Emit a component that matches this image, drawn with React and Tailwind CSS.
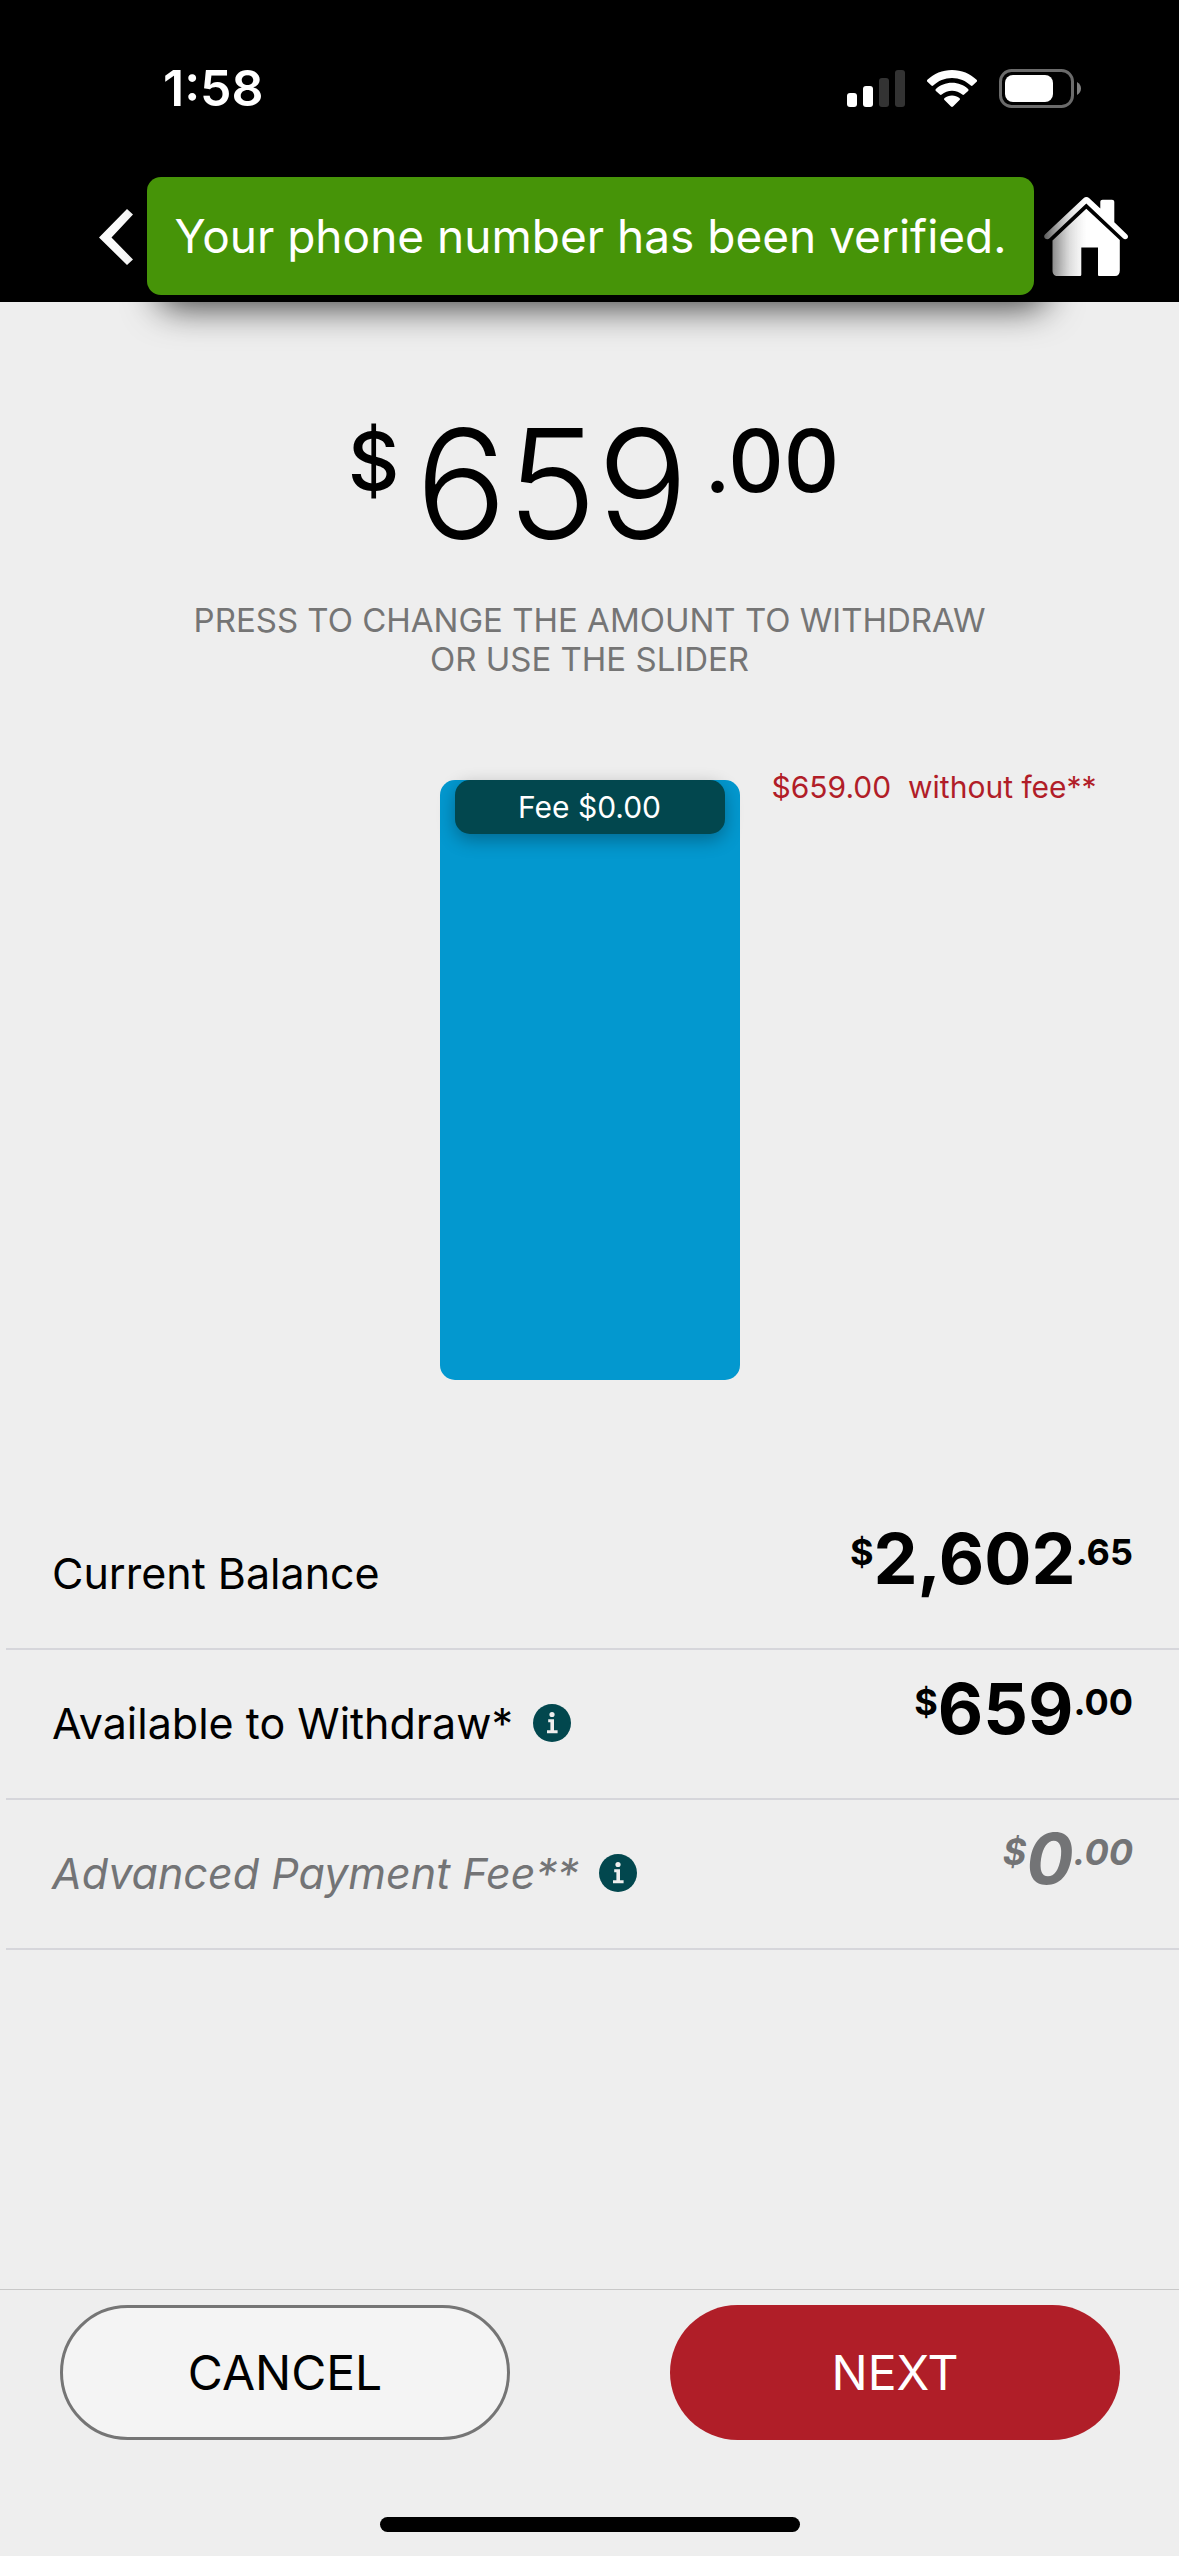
import { useState } from 'react';

const AVAILABLE = 659;

const rows = [
    { label: 'Current Balance', whole: '2,602', cents: '.65' },
    { label: 'Available to Withdraw*', whole: '659', cents: '.00', info: true },
    { label: 'Advanced Payment Fee**', whole: '0', cents: '.00', info: true, muted: true },
];

function SignalIcon() {
    return (
        <svg className="h-[37px] w-[58px]" viewBox="0 0 58 37" aria-hidden="true">
            <rect x="0" y="23" width="10" height="14" rx="3" fill="#fff" />
            <rect x="16" y="16" width="10" height="21" rx="3" fill="#fff" />
            <rect x="32" y="8" width="10" height="29" rx="3" fill="#333" />
            <rect x="48" y="0" width="10" height="37" rx="3" fill="#333" />
        </svg>
    );
}

function WifiIcon() {
    return (
        <svg className="h-[37px] w-[50px]" viewBox="0 0 50 37" fill="#fff" aria-hidden="true">
            <path d="M25 0C34.500 0 43.300 3.700 49.600 9.800C50.200 10.400 50.200 11.200 49.600 11.800L45.600 15.500C45.100 16 44.300 16 43.800 15.500C38.900 10.700 32.200 7.900 25 7.900S11.100 10.700 6.200 15.500C5.700 16 4.900 16 4.400 15.500L.4 11.800C-.2 11.200-.2 10.400 .4 9.800C6.700 3.700 15.500 0 25 0Z" />
            <path d="M25 12.800C31.200 12.800 36.900 15.100 41.100 18.900C41.700 19.500 41.700 20.300 41.100 20.900L37.100 24.600C36.600 25.100 35.800 25.100 35.300 24.600C32.500 22.200 28.900 20.800 25 20.800S17.500 22.200 14.700 24.600C14.200 25.100 13.400 25.100 12.900 24.600L8.900 20.900C8.300 20.300 8.300 19.500 8.900 18.900C13.100 15.100 18.800 12.800 25 12.800Z" />
            <path d="M25 25.600C27.800 25.600 30.400 26.500 32.400 28.100C33.100 28.700 33.100 29.500 32.500 30.100L26 36.500C25.400 37.100 24.600 37.100 24 36.500L17.500 30.100C16.900 29.500 16.900 28.700 17.600 28.100C19.600 26.500 22.200 25.600 25 25.600Z" />
        </svg>
    );
}

function BatteryIcon() {
    return (
        <svg className="h-[39px] w-[82px]" viewBox="0 0 82 39" aria-hidden="true">
            <rect x="1.500" y="1.500" width="72" height="36" rx="11" fill="none" stroke="#6b6b6b" strokeWidth="3" />
            <rect x="6" y="6" width="48" height="27" rx="8" fill="#fff" />
            <path d="M78 13C80.500 14.200 82 16.700 82 19.500S80.500 24.800 78 26Z" fill="#7f7f7f" />
        </svg>
    );
}

function HomeIcon() {
    return (
        <svg className="h-20 w-[84px]" viewBox="0 0 84 80" aria-hidden="true">
            <defs>
                <linearGradient id="homeShade" x1="0" y1="0" x2="84" y2="0" gradientUnits="userSpaceOnUse">
                    <stop offset="0" stopColor="#9a9a9a" />
                    <stop offset="0.100" stopColor="#c0c0c0" />
                    <stop offset="0.300" stopColor="#ececec" />
                    <stop offset="0.500" stopColor="#fff" />
                </linearGradient>
            </defs>
            <g fill="url(#homeShade)">
                <path d="M39.500 1.200C41.200-.3 43.600-.3 45.300 1.200L56.300 11.500V5C56.300 3.600 57.300 2.700 58.600 2.700H68C69.300 2.700 70.300 3.600 70.300 5V25.200L83 37.500C84.300 38.800 84.300 40.400 83.200 41.400C82 42.500 80.300 42.500 79 41.300L42.300 6.400L5.500 41.300C4.200 42.500 2.300 42.500 1.100 41.400C-.2 40.300-.2 38.500 1.200 37.200Z" />
                <path d="M42.300 11.800L75.800 43V73.500C75.800 77 74.200 79 71 79H55.500C54.400 79 54 78.500 54 77.400V50.500H37.300V77.400C37.300 78.500 36.800 79 35.600 79H13.600C10.300 79 8.500 77 8.500 73.500V43.500Z" />
            </g>
        </svg>
    );
}

function InfoIcon() {
    return (
        <svg className="size-[38px]" viewBox="0 0 38 38" aria-hidden="true">
            <circle cx="19" cy="19" r="19" fill="#02474e" />
            <circle cx="19" cy="10.500" r="2.600" fill="#eee" />
            <path d="M15.200 15.200H21V26.200H24.600V29.200H14V26.200H17.400V18.200H15.200Z" fill="#eee" />
        </svg>
    );
}

function Row({ label, whole, cents, info, muted }) {
    return (
        <div className={`ml-1.5 h-[150px] px-[46px] flex items-start justify-between border-b-2 border-[#d6d6db] ${muted ? 'italic text-[#737476]' : 'text-black'}`}>
            <dt className="flex items-center gap-5 pt-[46px] text-[43px] leading-[54px]">
                {label}
                {info && (
                    <button type="button" className="flex" aria-label={`About ${label}`}>
                        <InfoIcon />
                    </button>
                )}
            </dt>
            <dd className="flex items-start pt-6 font-bold">
                <span className="pt-2 text-4xl leading-10">$</span>
                <span className="text-[70px] leading-[70px]">{whole}</span>
                <span className="pt-2 text-4xl leading-10">{cents}</span>
            </dd>
        </div>
    );
}

export default function App() {
    const [amount, setAmount] = useState(AVAILABLE);

    return (
        <div className="min-h-screen flex flex-col bg-[#eee] text-black font-['Inter',sans-serif]">
            <header className="relative bg-black text-white">
                <div className="h-44 pl-[163px] pr-[98px] flex items-center justify-between">
                    <span className="text-[50px] leading-none font-semibold">1:58</span>
                    <div className="flex items-center gap-[22px]">
                        <SignalIcon />
                        <WifiIcon />
                        <BatteryIcon />
                    </div>
                </div>
                <div className="h-[126px] pl-[99px] pr-[51px] pb-1 flex items-center justify-between">
                    <button type="button" aria-label="Back">
                        <svg className="h-14 w-[34px]" viewBox="0 0 34 56" aria-hidden="true">
                            <path d="M28 0L34 5.500L12.500 28.500L34 50.500L28 56L0 28.500Z" fill="#fafafa" />
                        </svg>
                    </button>
                    <button type="button" aria-label="Home">
                        <HomeIcon />
                    </button>
                </div>
                {/* toast */}
                <div role="status" className="absolute bottom-[7px] left-[147px] right-[145px] h-[118px] flex items-center justify-center rounded-[14px] bg-[#469408] shadow-[12px_12px_36px_rgba(0,0,0,0.75)] text-[46px] whitespace-nowrap">
                    Your phone number has been verified.
                </div>
            </header>

            <main className="flex-1 flex flex-col">
                <button type="button" className="mt-[106px] flex flex-col items-center">
                    <span className="flex items-start pl-2">
                        <span className="pr-4 text-[80px] leading-[106px] font-medium">$</span>
                        <span className="text-[152px] leading-[152px] font-light">{amount}</span>
                        <span className="pl-4 text-[86px] leading-[106px] font-medium">.00</span>
                    </span>
                    <span className="mt-[41px] text-[33px] leading-[39px] text-[#757575]">
                        PRESS TO CHANGE THE AMOUNT TO WITHDRAW
                        <br />
                        OR USE THE SLIDER
                    </span>
                </button>

                <div className="mt-[101px] grid grid-cols-[1fr_300px_1fr]">
                    <div className="relative col-start-2 h-[600px] px-[15px] rounded-[15px] bg-[#0398cf]">
                        <div className="h-[54px] flex items-center justify-center rounded-[15px] bg-[#02474e] shadow-[0_6px_18px_rgba(0,0,0,0.3)] text-[30px] text-white">
                            Fee $0.00
                        </div>
                        <input
                            type="range"
                            aria-label="Amount to withdraw"
                            min="0"
                            max={AVAILABLE}
                            value={amount}
                            onChange={(e) => setAmount(Number(e.target.value))}
                            className="absolute inset-0 size-full opacity-0 [writing-mode:vertical-lr] [direction:rtl]"
                        />
                    </div>
                    <p className="-mt-[11px] pl-8 text-[30px] leading-9 whitespace-pre text-[#b11d28]">
                        $659.00  without fee**
                    </p>
                </div>

                <dl className="mt-[120px]">
                    {rows.map((row) => (
                        <Row key={row.label} {...row} />
                    ))}
                </dl>
            </main>

            <footer className="pt-[15px] pb-6 flex flex-col items-center gap-[77px] border-t border-[#c8c8c8]">
                <div className="w-full pl-[60px] pr-[59px] flex justify-between text-[48px]">
                    <button type="button" className="h-[135px] w-[450px] rounded-full border-[3px] border-[#757575] bg-[#f4f4f4]">
                        CANCEL
                    </button>
                    <button type="button" className="h-[135px] w-[450px] rounded-full bg-[#b01e28] text-white">
                        NEXT
                    </button>
                </div>
                <div className="h-[15px] w-[420px] rounded-full bg-black" />
            </footer>
        </div>
    );
}
